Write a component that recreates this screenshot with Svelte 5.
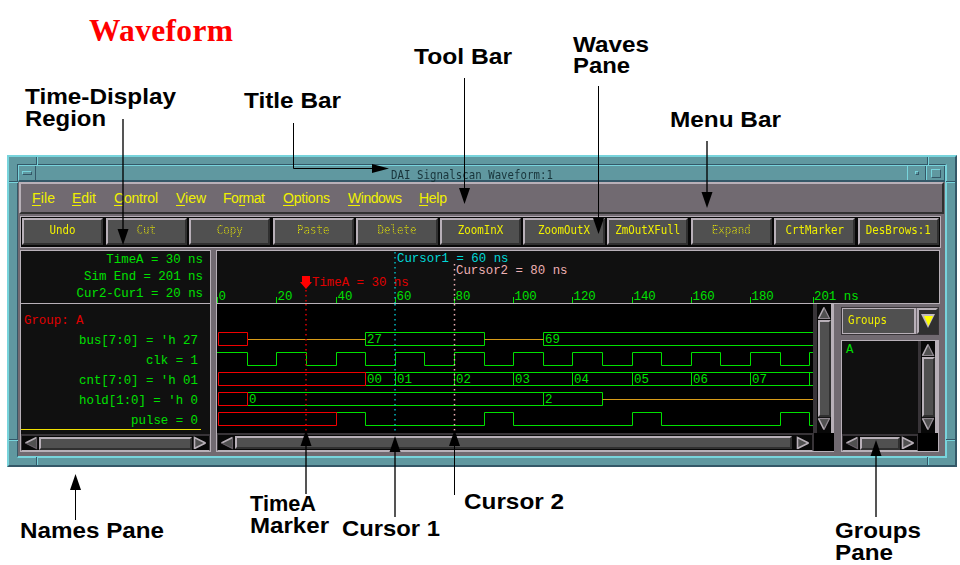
<script>
  const X = (t) => Math.floor(217.6 + 2.96 * t) + 0.5;
  const menus = [
    ['', 'F', 'ile', 32, 23], ['', 'E', 'dit', 72, 24], ['', 'C', 'ontrol', 114, 44], ['', 'V', 'iew', 176, 30],
    ['Fo', 'r', 'mat', 223, 42], ['', 'O', 'ptions', 283, 47], ['', 'W', 'indows', 348, 54], ['', 'H', 'elp', 419, 28]
  ];
  const tools = [
    ['Undo', 1], ['Cut', 0], ['Copy', 0], ['Paste', 0], ['Delete', 0], ['ZoomInX', 1],
    ['ZoomOutX', 1], ['ZmOutXFull', 1], ['Expand', 0], ['CrtMarker', 1], ['DesBrows:1', 1]
  ];
  const signals = ['bus[7:0] = ′h 27', 'clk = 1', 'cnt[7:0] = ′h 01', 'hold[1:0] = ′h 0', 'pulse = 0'];
  const ticks = [0, 20, 40, 60, 80, 100, 120, 140, 160, 180];
  let clk = `M217 352.5`;
  for (let t = 10; t <= 200; t += 10) {
    const hi = (t / 10) % 2 === 0;
    clk += `H${X(t)}V${hi ? 352.5 : 365.5}`;
  }
  clk += 'H813';
  const cnt = [[50, '00'], [60, '01'], [80, '02'], [100, '03'], [120, '04'], [140, '05'], [160, '06'], [180, '07'], [200, '']];
  const labels = [
    ['Time-Display', 25, 104, 151], ['Region', 25, 126, 81], ['Title Bar', 244, 108, 97], ['Tool Bar', 414, 64, 98],
    ['Waves', 573, 52, 76], ['Pane', 573, 73, 57], ['Menu Bar', 670, 127, 111], ['Names Pane', 20, 538, 144],
    ['TimeA', 250, 511, 66], ['Marker', 250, 533, 79], ['Cursor 1', 342, 536, 98], ['Cursor 2', 464, 509, 100],
    ['Groups', 835, 538, 86], ['Pane', 835, 560, 58]
  ];
  const down = [[123, 119, 245, 2], [464.5, 78, 204, 1], [598.5, 86, 234, 1], [707, 141, 208, 2]];
  const up = [[75.5, 474, 520, 1], [306, 430, 494, 2], [395, 436, 517, 2], [454.5, 430, 495, 1], [876, 440, 517, 2]];
</script>

{#snippet arrow(dir)}
  <svg class="arr" width="14" height="14" viewBox="0 0 14 14">
    <g transform="rotate({{ up: 0, right: 90, down: 180, left: 270 }[dir]} 7 7)">
      <path d="M7 1 L13 13 H1Z" fill="#505050" />
      {#if dir === 'up'}
        <path d="M1.5 12.5L7 1.5" class="lt" /><path d="M7 1.5L12.5 12.5H1" class="dk" />
      {:else if dir === 'left'}
        <path d="M7 1.5L12.5 12.5" class="lt" /><path d="M7 1.5L1.5 12.5H13" class="dk" />
      {:else if dir === 'down'}
        <path d="M12.5 12.5L7 1.5" class="lt" /><path d="M1 12.5H13" class="dk" /><path d="M7 1.5L1.5 12.5" class="dk" />
      {:else}
        <path d="M7 1.5L1.5 12.5H13" class="lt" /><path d="M7 1.5L12.5 12.5" class="lt" />
      {/if}
    </g>
  </svg>
{/snippet}
{#snippet hscroll()}
  <div class="hs">{@render arrow('left')}<div class="thumb"></div>{@render arrow('right')}</div>
{/snippet}
{#snippet vscroll()}
  <div class="vs">{@render arrow('up')}<div class="thumb"></div>{@render arrow('down')}</div>
{/snippet}

<main>
  <div class="win">
    <i class="v" style="left:27px;top:0"></i><i class="v" style="left:918px;top:0"></i>
    <i class="v" style="left:27px;bottom:0"></i><i class="v" style="left:918px;bottom:0"></i>
    <i class="h" style="left:0;top:24px"></i><i class="h" style="right:0;top:24px"></i>
    <i class="h" style="left:0;bottom:24px"></i><i class="h" style="right:0;bottom:24px"></i>
    <div class="inner">
      <div class="title">
        <span class="tb first"><b class="dash"></b></span>
        <span class="name"><span class="tall">DAI Signalscan Waveform:1</span></span>
        <span class="tb"><b class="dot"></b></span>
        <span class="tb last"><b class="box"></b></span>
      </div>
      <nav>
        {#each menus as [a, u, b, x, w], i}
          <svg height="28" width={w} style="margin-left:{i ? x - menus[i - 1][3] - menus[i - 1][4] : x - 21}px">
            <text x="0" y="18.5" textLength={w}>{a}<tspan>{u}</tspan>{b}</text>
            {#if a}<path d="M16 21.5H22" />{:else}<path d="M0 21.5H{u === 'W' ? 12 : u === 'O' ? 11 : 9}" />{/if}
          </svg>
        {/each}
      </nav>
      <div class="tools">
        {#each tools as [t, on]}
          <div class="btn"><span class="tall" class:off={!on}>{t}</span></div>
        {/each}
      </div>
      <div class="work">
        <section class="left">
          <div class="times"><p>TimeA = 30 ns</p><p>Sim End = 201 ns</p><p>Cur2-Cur1 = 20 ns</p></div>
          <div class="names">
            <p class="grp">Group: A</p>
            {#each signals as s}<p>{s}</p>{/each}
            <div class="sel"></div>
          </div>
          {@render hscroll()}
        </section>
        <section class="right">
          <svg class="ruler" width="722" height="52" viewBox="217 251 722 52">
            {#each ticks as t}
              <path d="M{X(t)} 297V303" stroke="#00e000" />
              <text x={X(t) + 1} y="300">{t}</text>
            {/each}
            <path d="M813.5 297V303" stroke="#00e000" />
            <text x="814" y="300">201 ns</text>
            <text x="397" y="262" class="t1">Cursor1 = 60 ns</text>
            <text x="456" y="274" class="t2">Cursor2 = 80 ns</text>
            <text x="312" y="286" class="ta">TimeA = 30 ns</text>
            <path d="M302 276H310V282H312L306 289L300 282H302Z" fill="#f00" />
            <path d="M306 290V303" class="c a" /><path d="M395 252V303" class="c b" /><path d="M454.5 264V303" class="c p" />
          </svg>
          <div class="lower">
            <div class="waves">
              <svg width="596" height="129" viewBox="217 304 596 129">
                <g fill="none" stroke="#00e000">
                  <path d="M{X(50)} 332.5H{X(90)}V345.5H{X(50)}ZM813 332.5H{X(110)}V345.5H813" />
                  <path d={clk} />
                  <path d="M{X(50)} 372.5H813M{X(50)} 385.5H813" />
                  {#each cnt.slice(1) as [t]}<path d="M{X(t)} 372V386" />{/each}
                  <path d="M{X(10)} 392.5H{X(130)}V405.5H{X(10)}M{X(110)} 392V406" />
                  <path d="M{X(40)} 412.5H{X(50)}V425.5H{X(90)}V412.5H{X(100)}V425.5H{X(140)}V412.5H{X(150)}V425.5H{X(190)}V412.5H{X(200)}V425.5H813" />
                </g>
                <path d="M{X(10)} 339.5H{X(50)}M{X(90)} 339.5H{X(110)}M{X(130)} 399.5H813" fill="none" stroke="#d89c18" />
                <g fill="none" stroke="#f00000">
                  <path d="M218.5 332.5H{X(10)}V345.5H218.5ZM218.5 372.5H{X(50)}V385.5H218.5ZM218.5 392.5H{X(10)}V405.5H218.5ZM218.5 412.5H{X(40)}V425.5H218.5Z" />
                </g>
                <text x="367" y="343">27</text><text x="545" y="343">69</text>
                {#each cnt as [t, s]}<text x={X(t) + 1.5} y="383">{s}</text>{/each}
                <text x="249" y="403">0</text><text x="545" y="403">2</text>
                <path d="M306 304V432" class="c a" /><path d="M395 304V432" class="c b" /><path d="M454.5 304V432" class="c p" />
              </svg>
              {@render hscroll()}
            </div>
            <div class="vcol">{@render vscroll()}<div class="corner"></div></div>
            <div class="groups">
              <div class="combo"><div class="gname"><span class="tall">Groups</span></div><div class="drop"><svg width="14" height="14"><path d="M0 0H14L7 14Z" fill="#c0b8c0" /><path d="M3 2H12L7.5 12Z" fill="#ff0" /></svg></div></div>
              <div class="list">
                <div class="lcol"><div class="items">A</div>{@render hscroll()}</div>
                <div class="vcol2">{@render vscroll()}<div class="corner"></div></div>
              </div>
            </div>
          </div>
        </section>
      </div>
    </div>
  </div>

  <svg class="notes" width="960" height="565">
    <text class="head" x="89" y="41" textLength="144">Waveform</text>
    {#each labels as [t, x, y, w]}<text {x} {y} textLength={w} lengthAdjust="spacingAndGlyphs">{t}</text>{/each}
    {#each down as [x, a, b, w]}
      <path d="M{x} {a}V{b - 10}" stroke-width={w} stroke={w === 2 ? '#000a' : '#000'} /><path d="M{x - 5.5} {b - 16}H{x + 5.5}L{x} {b}Z" />
    {/each}
    {#each up as [x, a, b, w]}
      <path d="M{x} {a + 10}V{b}" stroke-width={w} stroke={w === 2 ? '#000a' : '#000'} /><path d="M{x - 5.5} {a + 16}H{x + 5.5}L{x} {a}Z" />
    {/each}
    <path d="M293.5 123V168.5H375" fill="none" stroke="#000" /><path d="M372 164V173L389 168.5Z" />
  </svg>
</main>

<style>
  :global(body) { background: #fff; }
  * { box-sizing: border-box; }
  main { position: relative; width: 960px; height: 565px; overflow: hidden; padding: 155px 0 0 7px; font-family: 'Liberation Mono', monospace; }
  p { margin: 0; }
  svg { display: block; flex: none; }
  .win { position: relative; width: 950px; height: 312px; background: #6098a0; border: 2px solid; border-color: #78d4dc #345868 #345868 #78d4dc; padding: 7px 8px; }
  .v, .h { position: absolute; background: #78d4dc; }
  .v { width: 2px; height: 8px; border-left: 1px solid #345868; }
  .h { width: 9px; height: 2px; border-top: 1px solid #345868; }
  .inner { height: 294px; border: 1px solid; border-width: 1px 2px 2px 1px; border-color: #345868 #78d4dc #78d4dc #345868; background: #716a71; }
  .title { height: 17px; display: flex; background: #6098a0; border: 1px solid #78d4dc; border-width: 1px 0 2px 1px; border-bottom-color: #345868; }
  .tb { width: 17px; display: flex; align-items: center; justify-content: center; border-right: 1px solid #345868; }
  .tall { display: inline-block; transform: scaleY(1.15); }
  .name { flex: 1; font: 10.75px 'DejaVu Sans Mono', monospace; color: #18343a; text-align: center; line-height: 17px; padding-left: 1px; }
  .title .tb:not(.first) { border-left: 1px solid #78d4dc; width: 19px; }
  .tb b { border: 1px solid; border-color: #78d4dc #345868 #345868 #78d4dc; }
  .dash { width: 10px; height: 4px; } .dot { width: 4px; height: 4px; } .box { width: 10px; height: 9px; }
  nav { height: 32px; margin: 0 1px; border: 2px solid; border-color: #b8b0b8 #303030 #303030 #b8b0b8; display: flex; }
  nav svg { overflow: visible; }
  nav text { font: 14px 'Liberation Sans', sans-serif; fill: #f0f000; }
  nav path { stroke: #f0f000; }
  .tools { height: 32px; width: 921px; margin: 2px 0 0 2px; border: 1px solid #b8b0b8; background: #080808; padding: 1px 1px 2px; display: flex; gap: 2.4px; }
  .btn { flex: 1; min-width: 0; background: #505050; border: 2px solid; border-color: #b8b0b8 #303030 #303030 #b8b0b8; font: 10.8px/22px 'DejaVu Sans Mono', monospace; color: #f0f000; text-align: center; }
  .off { mask-image: conic-gradient(#000 25%, #0004 0 50%, #000 0 75%, #0004 0); mask-size: 2px 2px; }
  .work { height: 202px; width: 921px; margin: 2px 0 0 2px; display: flex; justify-content: space-between; }
  .left { width: 191px; border: 1px solid #b8b0b8; background: #101010; display: flex; flex-direction: column; color: #00e000; font-size: 12.4px; text-align: right; }
  .times { height: 53px; border-bottom: 1px solid #b8b0b8; padding: 1px 7px 0 0; line-height: 17px; }
  .names { height: 130px; padding: 7px 12px 0 0; line-height: 20px; }
  .grp { color: #e00000; text-align: left; padding-left: 3px; }
  .sel { width: 180px; height: 1px; background: #f0e000; margin-top: -2px; }
  .hs, .vs { display: flex; align-items: center; background: #080808; border: solid #383438; }
  .hs { height: 17px; border-width: 2px 1px 1px; border-bottom-color: #b8b0b8; padding: 0 2px; }
  .vs { flex: 1; flex-direction: column; width: 20px; border-width: 0 3px; border-right-color: #b8b0b8; padding: 2px 0; }
  .thumb { flex: 1; background: #505050; border: 2px solid; border-color: #b8b0b8 #303030 #303030 #b8b0b8; }
  .hs .thumb { height: 13px; margin: 0 1px; } .vs .thumb { width: 13px; }
  .lt, .dk { fill: none; stroke: #b8b0b8; stroke-width: 1.6; } .dk { stroke: #686068; stroke-width: 1.2; }
  .vs .dk { stroke: #908890; }
  .right { width: 725px; }
  .right text { font: 12.4px 'Liberation Mono', monospace; fill: #00e000; white-space: pre; }
  .right .t1 { fill: #00d8d8; } .right .t2 { fill: #eeb0b4; } .right .ta { fill: #e00000; }
  .ruler { box-sizing: content-box; background: #101010; border: 1px solid #b8b0b8; }
  .c { stroke-dasharray: 1.5 3.5; stroke-width: 1.5; } .a { stroke: #e00000; } .b { stroke: #00b8c0; } .p { stroke: #eeb0b4; }
  .lower { height: 148px; display: flex; }
  .waves { width: 597px; border-left: 1px solid #b8b0b8; border-bottom: 1px solid #b8b0b8; background: #000; }
  .waves .hs { height: 18px; }
  .waves .hs .thumb { margin-right: 4px; }
  .vcol { width: 21px; padding-left: 1px; display: flex; flex-direction: column; border-bottom: 1px solid #b8b0b8; background: #383438; }
  .corner { height: 18px; background: #000; }
  .groups { margin-left: 7px; width: 98px; padding-top: 3px; }
  .combo { height: 28px; border: 1px solid #383438; display: flex; justify-content: space-between; }
  .gname { width: 74px; background: #505050; border: 1px solid #b8b0b8; border-right-width: 2px; font: 10.8px/24px 'DejaVu Sans Mono', monospace; color: #f0f000; padding-left: 5px; }
  .drop { width: 21px; background: #303030; border: 2px solid; border-color: #b8b0b8 #303030 #303030 #b8b0b8; padding: 4px 0 0 2px; }
  .list { height: 112px; margin-top: 5px; border: 1px solid #b8b0b8; background: #101010; display: flex; }
  .lcol { width: 76px; } .items { height: 93px; color: #00e000; font-size: 12.4px; padding: 2px 4px; }
  .vcol2 { width: 20px; display: flex; flex-direction: column; }
  .notes { position: absolute; left: 0; top: 0; }
  .notes text { font: bold 22px 'Liberation Sans', sans-serif; }
  .notes .head { font: bold 31.5px 'Liberation Serif', serif; fill: #f00; }
</style>
